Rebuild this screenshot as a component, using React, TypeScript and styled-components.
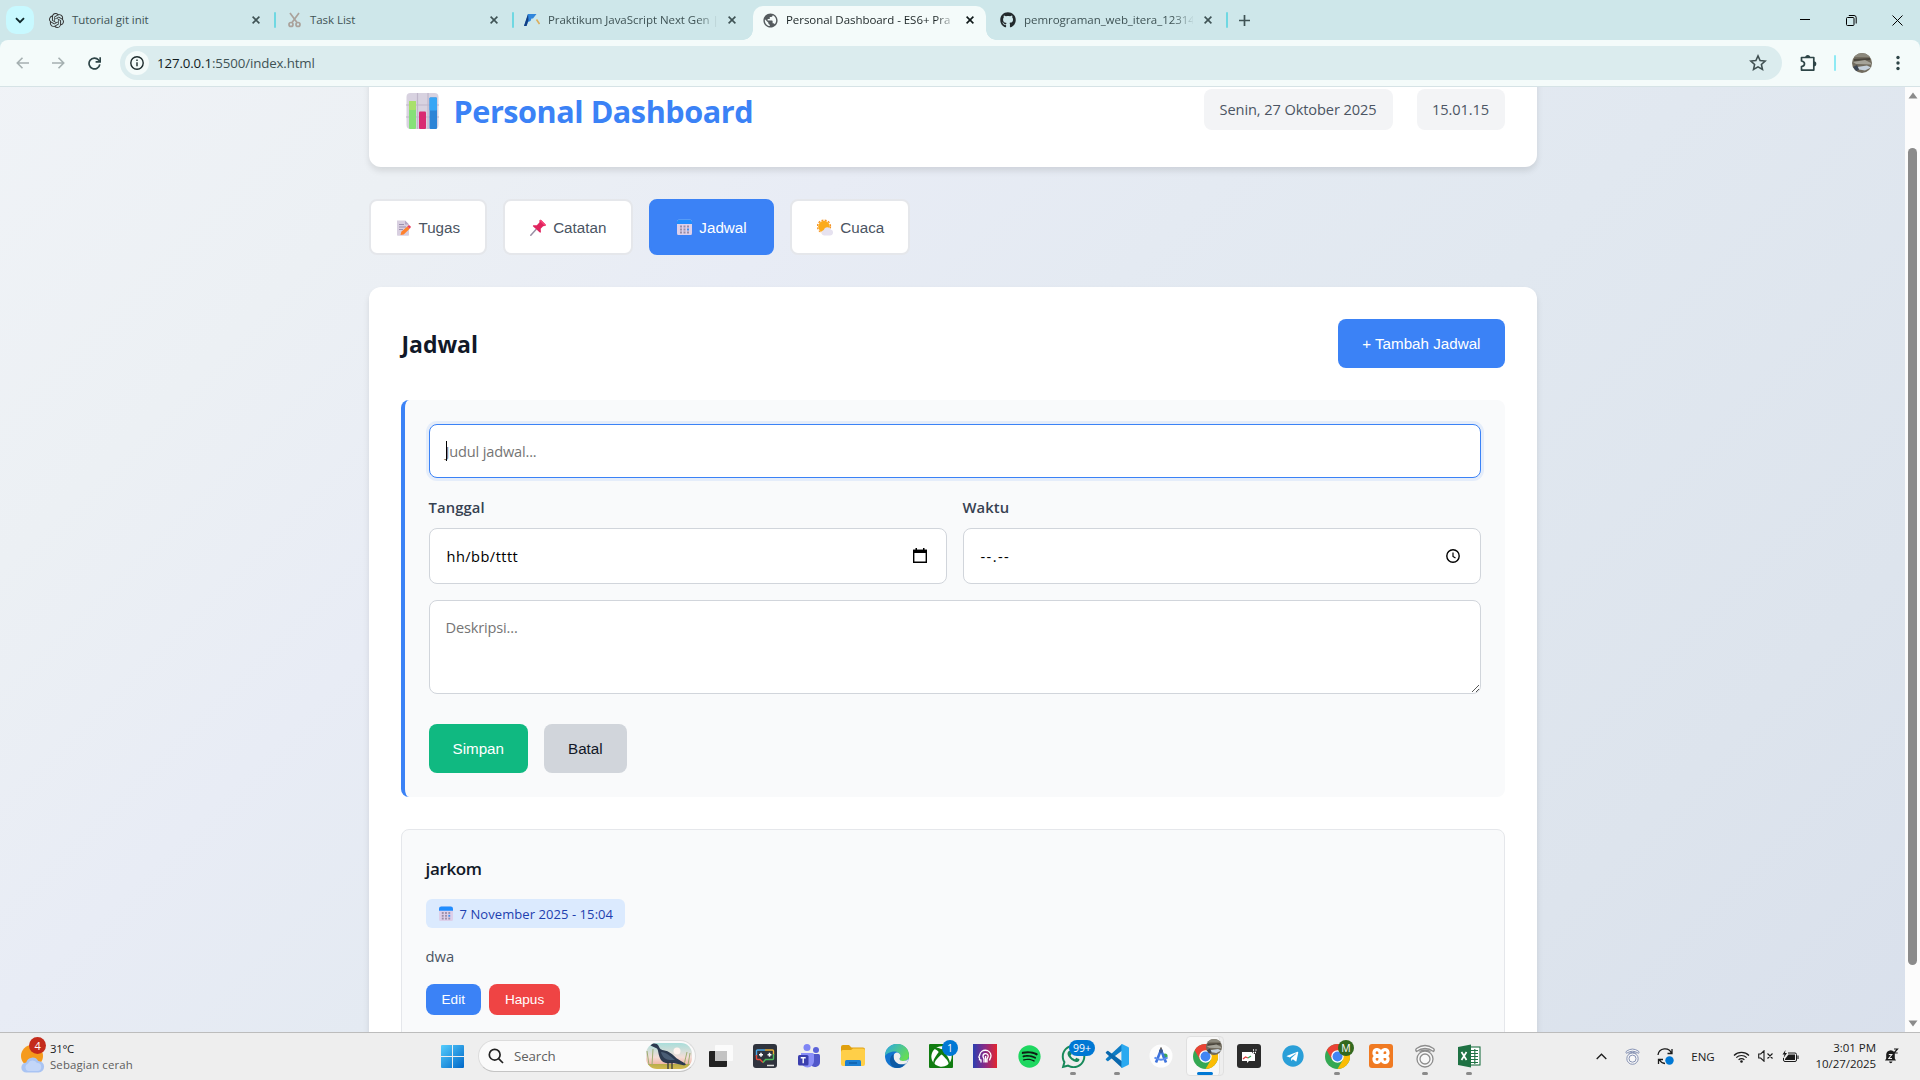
import React from 'react';
import styled, { createGlobalStyle, css } from 'styled-components';
import { FaGithub, FaXbox, FaSpotify, FaWhatsapp, FaTelegram } from 'react-icons/fa';
import { SiOpenai } from 'react-icons/si';
import { MdPublic } from 'react-icons/md';

const ui = `"Open Sans", "Noto Sans", sans-serif`;
const arial = `"Liberation Sans", Arial, sans-serif`;

const GlobalStyle = createGlobalStyle`
  * { box-sizing: border-box; }
  html, body { margin: 0; padding: 0; overflow: hidden; }
  body { font-family: ${ui}; }
  svg { display: block; flex: none; }
`;

const Screen = styled.div`
  width: 1920px;
  height: 1080px;
  display: flex;
  flex-direction: column;
  overflow: hidden;
`;

/* ---------- browser chrome ---------- */

const TabStrip = styled.div`
  height: 40px;
  flex: none;
  background: #cee7ea;
  display: flex;
  padding-left: 6px;
`;

const TabSearch = styled.div`
  width: 28px;
  height: 28px;
  margin: 6px 5px 0 0;
  border-radius: 10px;
  background: #c8f9ff;
  display: grid;
  place-items: center;
`;

const Tab = styled.div<{ $active?: boolean }>`
  position: relative;
  width: 238px;
  flex: none;
  height: 34px;
  margin-top: 6px;
  padding: 0 0 6px 9px;
  display: flex;
  align-items: center;
  color: ${p => (p.$active ? '#1c2526' : '#3f5355')};
  ${p =>
    p.$active &&
    css`
      width: 233px;
      margin-right: 5px;
      border-radius: 10px 10px 0 0;
      background: #f4fbfa;
      &::before, &::after {
        content: '';
        position: absolute;
        bottom: 0;
        width: 10px;
        height: 10px;
      }
      &::before { left: -10px; background: radial-gradient(circle at 0 0, transparent 9.5px, #f4fbfa 10px); }
      &::after { right: -10px; background: radial-gradient(circle at 100% 0, transparent 9.5px, #f4fbfa 10px); }
    `}
`;

const Favicon = styled.div`
  width: 16px;
  height: 16px;
  flex: none;
  margin-right: 8px;
  display: grid;
  place-items: center;
`;

const TabTitle = styled.div<{ $fade?: boolean }>`
  width: 169px;
  flex: none;
  white-space: nowrap;
  font-size: 11.5px;
  line-height: 18px;
  letter-spacing: -0.05px;
  ${p => p.$fade && 'mask-image: linear-gradient(90deg, #000 88%, transparent 101%);'}
`;

const TabClose = styled.div`
  width: 16px;
  flex: none;
  margin-left: 7px;
  display: grid;
  place-items: center;
`;

const TabDivider = styled.div`
  width: 2px;
  height: 16px;
  margin-left: 10px;
  border-radius: 1px;
  background: #6fd8e2;
`;

const NewTab = styled.div`
  width: 28px;
  height: 28px;
  margin: 6px 0 0 1px;
  display: grid;
  place-items: center;
`;

const WindowButtons = styled.div`
  margin-left: auto;
  display: flex;
`;

const WindowButton = styled.div`
  width: 46px;
  height: 40px;
  display: grid;
  place-items: center;
`;

const ToolbarWrap = styled.div`
  height: 47px;
  flex: none;
  background: #cee7ea;
`;

const Toolbar = styled.div`
  height: 47px;
  background: #f4fbfa;
  border-radius: 8px 8px 0 0;
  border-bottom: 1px solid #d6e3e6;
  display: flex;
  align-items: center;
  padding-left: 4px;
`;

const ToolButton = styled.div<{ $w?: number }>`
  width: ${p => p.$w ?? 36}px;
  height: 34px;
  display: grid;
  place-items: center;
`;

const Omnibox = styled.div`
  width: 1662px;
  height: 34px;
  margin-left: 8px;
  border-radius: 17px;
  background: #dbecee;
  display: flex;
  align-items: center;
  padding: 0 13px 0 5px;
`;

const SiteInfo = styled.div`
  width: 24px;
  height: 24px;
  border-radius: 50%;
  background: #f4fbfa;
  display: grid;
  place-items: center;
`;

const Url = styled.div`
  margin-left: 8px;
  flex: 1;
  font-size: 13.3px;
  letter-spacing: -0.13px;
  color: #3f5355;
  span { color: #111b1c; }
`;

const ToolDivider = styled.div`
  width: 2px;
  height: 16px;
  border-radius: 1px;
  background: #8eeaf4;
`;

/* ---------- page ---------- */

const Viewport = styled.div`
  height: 945px;
  flex: none;
  display: flex;
  overflow: hidden;
`;

const Page = styled.div`
  width: 1905px;
  height: 1058px;
  margin-top: -53px;
  padding: 19px 368.5px 0;
  background: linear-gradient(135deg, #f0f3f7 0%, #ecf0f4 18%, #e8ecf5 33%, #e4eaf2 46%, #e1e8f0 59%, #dde4ed 82%, #d9e0ec 100%);
`;

const Card = styled.section`
  background: #fff;
  border-radius: 12px;
  box-shadow: 0 4px 6px rgba(0, 0, 0, 0.1);
`;

const Header = styled(Card)`
  height: 114px;
  padding: 0 32px;
  display: flex;
  align-items: center;
`;

const Brand = styled.h1`
  margin: 0;
  flex: 1;
  display: flex;
  align-items: center;
  gap: 15px;
  padding: 1px 0 0 5px;
  font-size: 30.6px;
  line-height: 44px;
  font-weight: 700;
  letter-spacing: -0.45px;
  color: #3b82f6;
`;

const Chip = styled.div<{ $w: number }>`
  width: ${p => p.$w}px;
  height: 41px;
  margin: -1px 0 0 24px;
  padding-bottom: 1px;
  border-radius: 8px;
  background: #f3f4f6;
  color: #4b5563;
  font-size: 14.6px;
  letter-spacing: -0.1px;
  display: flex;
  align-items: center;
  justify-content: center;
  white-space: nowrap;
`;

const Nav = styled.nav`
  display: flex;
  gap: 16px;
  margin: 32px 0;
`;

const NavButton = styled.button<{ $w: number; $active?: boolean }>`
  width: ${p => p.$w}px;
  height: 56px;
  padding: 0 0 0 1px;
  border: 2px solid ${p => (p.$active ? '#3b82f6' : '#e5e7eb')};
  border-radius: 8px;
  background: ${p => (p.$active ? '#3b82f6' : '#fff')};
  color: ${p => (p.$active ? '#fff' : '#4b5563')};
  font: 15.2px ${arial};
  display: flex;
  align-items: center;
  justify-content: center;
  gap: 7.5px;
`;

const Panel = styled(Card)`
  height: 900px;
  padding: 32px;
`;

const PanelHead = styled.div`
  height: 49px;
  display: flex;
  align-items: center;
  justify-content: space-between;
  margin-bottom: 32px;
`;

const PanelTitle = styled.h2`
  margin: 0 0 0 1px;
  font-size: 23px;
  font-weight: 700;
  letter-spacing: -0.05px;
  color: #111827;
`;

const tones = {
  primary: ['#3b82f6', '#fff'],
  success: ['#10b981', '#fff'],
  neutral: ['#d1d5db', '#111827'],
  danger: ['#ef4444', '#fff'],
};

const Button = styled.button<{ $tone: keyof typeof tones; $small?: boolean }>`
  height: ${p => (p.$small ? 31 : 49)}px;
  padding: 0 ${p => (p.$small ? 16 : 24)}px;
  border: 0;
  border-radius: 8px;
  background: ${p => tones[p.$tone][0]};
  color: ${p => tones[p.$tone][1]};
  font: ${p => (p.$small ? 13.6 : 15.2)}px ${arial};
  white-space: nowrap;
`;

const Form = styled.div`
  height: 397px;
  border-left: 4px solid #3b82f6;
  border-radius: 8px;
  background: #f9fafb;
  padding: 24px;
  display: flex;
  flex-direction: column;
`;

const Field = styled.div<{ $h: number; $focus?: boolean; $area?: boolean }>`
  position: relative;
  height: ${p => p.$h}px;
  flex: none;
  border: 1px solid ${p => (p.$focus ? '#3b82f6' : '#d1d5db')};
  border-radius: 8px;
  background: #fff;
  ${p => p.$focus && 'box-shadow: 0 0 0 3px rgba(59, 130, 246, 0.1);'}
  padding: ${p => (p.$area ? '15px 16px 0' : '0 16px')};
  display: flex;
  align-items: ${p => (p.$area ? 'flex-start' : 'center')};
  justify-content: space-between;
  font-size: 14.6px;
  letter-spacing: -0.17px;
  line-height: 22px;
  color: #000;
`;

const Placeholder = styled.span`
  color: #757575;
`;

const FieldValue = styled.span<{ $ls: number }>`
  margin-left: 1px;
  letter-spacing: ${p => p.$ls}px;
`;

const Caret = styled.i`
  position: absolute;
  left: 16px;
  top: 16px;
  width: 1px;
  height: 20px;
  background: #000;
`;

const Grip = styled.svg`
  position: absolute;
  right: 1px;
  bottom: 1px;
`;

const FieldRow = styled.div`
  display: grid;
  grid-template-columns: 1fr 1fr;
  gap: 16px;
  margin: 18px 0 16px;
`;

const FieldLabel = styled.label`
  display: block;
  height: 24px;
  margin-bottom: 8px;
  font-size: 14.8px;
  line-height: 23px;
  font-weight: 600;
  letter-spacing: 0.1px;
  color: #374151;
`;

const Actions = styled.div<{ $gap: number; $top: number }>`
  display: flex;
  gap: ${p => p.$gap}px;
  margin-top: ${p => p.$top}px;
`;

const Item = styled.article`
  height: 240px;
  margin-top: 32px;
  border: 1px solid #e5e7eb;
  border-radius: 8px;
  background: #f9fafb;
  padding: 24px;
`;

const ItemTitle = styled.h3`
  margin: 0 0 16px;
  font-size: 17px;
  line-height: 29px;
  font-weight: 600;
  letter-spacing: -0.35px;
  color: #111827;
`;

const DateBadge = styled.div`
  width: 199px;
  height: 29px;
  border-radius: 6px;
  background: #dbeafe;
  color: #1e40af;
  font-size: 13px;
  letter-spacing: 0.07px;
  display: flex;
  align-items: center;
  padding-left: 13px;
  gap: 7px;
  white-space: nowrap;
`;

const ItemText = styled.p`
  margin: 16px 0 0;
  font-size: 14.8px;
  line-height: 24px;
  color: #4b5563;
`;

const Scrollbar = styled.div`
  width: 15px;
  height: 945px;
  background: #fcfcfc;
  display: flex;
  flex-direction: column;
  align-items: center;
  padding: 5px 0;
`;

const Thumb = styled.div`
  width: 9px;
  height: 817px;
  margin: 49px 0 auto;
  border-radius: 5px;
  background: #8b8b8b;
`;

/* ---------- taskbar ---------- */

const Taskbar = styled.footer`
  height: 48px;
  flex: none;
  background: #eee;
  border-top: 1px solid #bcbcbc;
  display: flex;
  align-items: center;
  padding-bottom: 1px;
`;

const Weather = styled.div`
  width: 430px;
  padding: 1px 0 0 20px;
  display: flex;
  align-items: center;
  gap: 5px;
  font-size: 11.4px;
  line-height: 16px;
  letter-spacing: -0.3px;
  color: #1b1b1b;
  div div + div { color: #5d5d5d; letter-spacing: 0.12px; }
`;

const StartCell = styled.div`
  width: 45px;
  display: grid;
  place-items: center;
`;

const SearchPill = styled.div`
  width: 218px;
  height: 32px;
  margin: 0 3px;
  border: 1px solid #dcdcdc;
  border-bottom-color: #c4c4c4;
  border-radius: 16px;
  background: #fafafa;
  display: flex;
  align-items: center;
  padding: 0 3px 0 9px;
  font-size: 13.3px;
  letter-spacing: -0.1px;
  color: #5f5f5f;
  span { flex: 1; margin: 0 0 1px 10px; }
`;

const AppCell = styled.div`
  position: relative;
  width: 44px;
  height: 47px;
  display: grid;
  place-items: center;
`;

const ActiveApp = styled.div`
  width: 38px;
  height: 40px;
  border: 1px solid #e0e0e0;
  border-radius: 4px;
  background: #f8f8f8;
  box-shadow: inset -4px 0 0 -1px #eee, inset -5px 0 0 -1px #e2e2e2;
  display: grid;
  place-items: center;
`;

const Indicator = styled.i<{ $active?: boolean }>`
  position: absolute;
  bottom: 5px;
  left: ${p => (p.$active ? 14 : 19)}px;
  width: ${p => (p.$active ? 16 : 6)}px;
  height: 3px;
  border-radius: 2px;
  background: ${p => (p.$active ? '#0078d4' : '#8a8a8a')};
`;

const Badge = styled.b<{ $bg?: string; $wide?: boolean }>`
  position: absolute;
  top: 7px;
  left: ${p => (p.$wide ? 18 : 23)}px;
  min-width: 16px;
  height: 16px;
  padding: 0 ${p => (p.$wide ? 4 : 0)}px;
  border-radius: 8px;
  background: ${p => p.$bg ?? '#0078d4'};
  color: #fff;
  font: 10.5px/16px ${ui};
  text-align: center;
`;

const AvatarBadge = styled.div`
  position: absolute;
  top: 6px;
  left: 23px;
`;

const Tray = styled.div`
  margin-left: auto;
  padding-right: 14px;
  display: flex;
  align-items: center;
`;

const TrayCell = styled.div<{ $w: number }>`
  width: ${p => p.$w}px;
  display: grid;
  place-items: center;
  font-size: 11.5px;
  color: #1b1b1b;
`;

const Clock = styled.div`
  width: 70px;
  text-align: right;
  font-size: 11.5px;
  line-height: 16px;
  letter-spacing: -0.05px;
  color: #1b1b1b;
`;

/* ---------- drawings ---------- */

const CloseIcon = ({ c = '#3f5355' }: { c?: string }) => (
  <svg width="8" height="8" viewBox="0 0 8 8" stroke={c} strokeWidth="1.6"><path d="M.6.6l6.8 6.8M7.4.6L.6 7.4" /></svg>
);

const ChartEmoji = () => (
  <svg width="33" height="36" viewBox="0 0 33 36">
    <rect x=".5" width="32" height="36" rx="4" fill="#d8d2e0" />
    <path d="M11.5 0v36M22 0v36M0 12h33M0 24h33" stroke="#bfb6ca" strokeWidth="1.2" />
    <rect x="3" y="8" width="7" height="28" rx="1" fill="#86e077" />
    <rect x="3" y="8" width="7" height="9" rx="1" fill="#a9e06c" />
    <rect x="13" y="18.500" width="7" height="17.500" rx="1" fill="#d92b72" />
    <rect x="23.500" y="4.500" width="7.500" height="31.500" rx="1" fill="#2d84d6" />
    <rect x="23.500" y="4.500" width="7.500" height="13" rx="1" fill="#38a6f5" />
  </svg>
);

const MemoEmoji = () => (
  <svg width="15" height="17" viewBox="0 0 15 17">
    <path d="M1 1.500h8l4 4V16a.8.8 0 0 1-.8.8H1.800A.8.800 0 0 1 1 16z" fill="#d8cfe0" />
    <path d="M9 1.500l4 4H9z" fill="#b3a6c2" />
    <path d="M3 5.500h5M3 8h7M3 10.500h4" stroke="#9c8fae" strokeWidth="1" />
    <path d="M4.500 16l.8-3.200 6-5.300 2.400 2.300-6 5.600z" fill="#ff822d" />
    <path d="M11.300 7.500l1-1a1 1 0 0 1 1.400 0l.8.8a1 1 0 0 1 0 1.400l-.8 1.100z" fill="#e8405f" />
  </svg>
);

const PinEmoji = () => (
  <svg width="16" height="17" viewBox="0 0 16 17">
    <path d="M6 10.500L.8 16.300" stroke="#998ea4" strokeWidth="1.500" strokeLinecap="round" />
    <path d="M9.500 1.500c.4-1 1.200-1 1.900-.3l4 4c.6.700.4 1.500-.5 1.700l-1.800.3-2.400 2.600.2 3c0 .9-.8 1.100-1.400.5L3.200 7.600c-.6-.7-.3-1.400.5-1.400l3.100.1 2.600-2.700z" fill="#e0245e" />
    <path d="M9.500 1.500c.4-1 1.200-1 1.900-.3l4 4c.6.700.4 1.500-.5 1.700z" fill="#f8477a" />
  </svg>
);

const CalendarEmoji = ({ s = 15 }: { s?: number }) => (
  <svg width={s} height={s * 1.1} viewBox="0 0 15 16.500">
    <rect y=".5" width="15" height="16" rx="2.500" fill="#ddd0ea" />
    <path d="M0 5V3A2.500 2.500 0 0 1 2.500.5h10A2.500 2.500 0 0 1 15 3v2z" fill="#1f8dff" />
    <g>
      {[3, 6.500, 10].map(x => [7, 10, 13].map(y => <rect key={`${x}-${y}`} x={x} y={y - 0.500} width="2" height="2" fill={x === 10 && y === 10 ? '#3b8df0' : '#998da6'} />))}
    </g>
  </svg>
);

const WeatherEmoji = () => (
  <svg width="16" height="17" viewBox="0 0 16 17">
    <circle cx="7" cy="7.500" r="5.800" fill="#fbab1c" />
    <circle cx="7" cy="7.500" r="6.500" fill="none" stroke="#f59322" strokeWidth="1.300" strokeDasharray="2 1.400" />
    <path d="M7 16.500a2.800 2.800 0 0 1-.3-5.500 3.800 3.800 0 0 1 7-.6A3.100 3.100 0 0 1 13 16.500z" fill="#e6e2f0" />
  </svg>
);

const ChromeLogo = () => (
  <svg width="25" height="25" viewBox="0 0 48 48">
    <circle cx="24" cy="24" r="24" fill="#34a853" />
    <path d="M24 12h20.800A24 24 0 0 1 24 48l10.400-18z" fill="#fbbc05" />
    <path d="M3.200 12A24 24 0 0 1 44.800 12H24L13.600 30z" fill="#ea4335" />
    <circle cx="24" cy="24" r="12" fill="#fff" />
    <circle cx="24" cy="24" r="9.500" fill="#4285f4" />
  </svg>
);

const Photo = ({ s }: { s: number }) => (
  <svg width={s} height={s} viewBox="0 0 20 20">
    <clipPath id={`ph${s}`}><circle cx="10" cy="10" r="10" /></clipPath>
    <g clipPath={`url(#ph${s})`}>
      <rect width="20" height="20" fill="#716b5e" />
      <path d="M0 0h20v4H0z" fill="#8b887c" />
      <path d="M2 6l16-1v2L2 8z" fill="#4a463d" />
      <path d="M1 9l12-2 6 3v1.500L4 11z" fill="#a5a399" />
      <path d="M5 14l10-1.500 4 2-6 3-6-1z" fill="#c4d0dc" />
      <path d="M1 14l4-2 2 4.500-3 2z" fill="#3c4654" />
    </g>
  </svg>
);

const CloudSun = () => (
  <svg width="25" height="40" viewBox="0 0 25 40">
    <circle cx="12" cy="19" r="11" fill="#f59a1d" />
    <path d="M6.500 35.500a5 5 0 0 1-.3-10 6.500 6.500 0 0 1 12-1.500 5.500 5.500 0 0 1 .3 11.500z" fill="#a9c4f3" />
    <path d="M8 34a4 4 0 0 1 0-7.500 5 5 0 0 1 9-.5 4 4 0 0 1 .5 8z" fill="#c3d6f8" />
  </svg>
);

const WeatherIcon = styled.div`
  position: relative;
  width: 25px;
  height: 40px;
`;

const AlertDot = styled.b`
  position: absolute;
  left: 9px;
  top: 0;
  width: 17px;
  height: 17px;
  border-radius: 50%;
  background: #c42b1c;
  color: #fff;
  font: 11px/17px ${ui};
  text-align: center;
`;

const Bird = () => (
  <svg width="46" height="26" viewBox="0 0 46 26">
    <defs>
      <linearGradient id="sky" x1="0" y1="0" x2="0" y2="1">
        <stop offset="0" stopColor="#a9dedb" /><stop offset=".55" stopColor="#f3ddd6" /><stop offset=".8" stopColor="#f1b9a8" /><stop offset=".82" stopColor="#b9ae4a" /><stop offset="1" stopColor="#d3b950" />
      </linearGradient>
    </defs>
    <rect width="46" height="26" rx="11" fill="url(#sky)" />
    <circle cx="31" cy="8" r="3.500" fill="#fff3ee" />
    <path d="M3 22L1 8M6 22L7 6M38 22l3-13M42 22l2-12" stroke="#9fae74" strokeWidth="1" />
    <path d="M4.500 2.500c2-3 6.500-2.500 8 .2 1 2 1.500 4 5 4.500 6 1 9 4 13 8l9 5.500c1 1-1 2-3 1.300l-9-2c-7 1-12 0-14-6C12 10 12.500 7.500 11 5.500z" fill="#2c3a50" />
    <path d="M15 9c5 0 9 4 14 8h-5c-4 0-8-3-9-8z" fill="#4a5d75" />
    <path d="M22 19v7M26 19v7" stroke="#2b2f38" strokeWidth="1.200" />
  </svg>
);

const TaskView = () => (
  <svg width="24" height="24" viewBox="0 0 24 24">
    <rect x="0" y="7" width="18" height="16" rx="1" fill="#222" />
    <rect x="6" y="1" width="18" height="16" rx="1" fill="#fbfbfb" />
    <rect x="6" y="7" width="12" height="10" fill="#c3c3c3" />
  </svg>
);

const GameChat = () => (
  <svg width="24" height="24" viewBox="0 0 24 24">
    <rect width="24" height="24" rx="3" fill="#2f333d" />
    <g fill="none" strokeWidth="1.400">
      <path d="M12 6H4.500Q3.500 6 3.500 7v5" stroke="#4aa8e8" />
      <path d="M12 6h7.500q1 0 1 1v4" stroke="#e9b23b" />
      <path d="M3.500 11v3.500q0 1 1 1H7l3 3" stroke="#e74a3c" />
      <path d="M20.500 10v4.500q0 1-1 1h-7l-2.500 3" stroke="#4fbd5b" />
    </g>
    <path d="M6 10.800h4M8 8.800v4M14.500 10.800h4M16.500 8.800v4" stroke="#fff" strokeWidth="1.500" />
    <path d="M14 21.500h7" stroke="#ddd" strokeWidth="1.500" />
  </svg>
);

const Teams = () => (
  <svg width="24" height="24" viewBox="0 0 24 24">
    <circle cx="10" cy="3.500" r="3.500" fill="#7f85f5" />
    <circle cx="19" cy="6" r="3" fill="#5a62d8" />
    <path d="M14 10h7.500q1.500 0 1.500 1.500V18a5 5 0 0 1-9 3z" fill="#5157c9" />
    <path d="M4 9h11.500q1.500 0 1.500 1.500V17a6.500 6.500 0 0 1-13 0z" fill="#8b8ff8" />
    <rect x="1" y="11" width="10.500" height="10.500" rx="1.500" fill="#3b3fae" />
    <path d="M3.700 13.700h5M6.200 13.700v5.500" stroke="#fff" strokeWidth="1.400" />
  </svg>
);

const Folder = () => (
  <svg width="24" height="24" viewBox="0 0 24 24">
    <path d="M0 3q0-2 2-2h6l2.500 2.500H22q2 0 2 2V8H0z" fill="#e0a00e" />
    <path d="M0 8q0-2 2-2h8l2-1.500h10q2 0 2 2V20q0 2-2 2H2q-2 0-2-2z" fill="#ffcf48" />
    <path d="M4 22v-4.500Q4 16 5.500 16h13q1.500 0 1.500 1.500V22z" fill="#1c7fd2" />
    <path d="M8 19h8" stroke="#0c58a0" strokeWidth="1.200" />
  </svg>
);

const Edge = () => (
  <svg width="24" height="24" viewBox="0 0 24 24">
    <defs>
      <linearGradient id="e1" x1="0" y1="0" x2="1" y2=".6"><stop offset="0" stopColor="#2aa7e8" /><stop offset="1" stopColor="#66dd55" /></linearGradient>
    </defs>
    <circle cx="12" cy="12" r="12" fill="#1374cf" />
    <path d="M0 12A12 12 0 0 1 24 11.500c0 4-3 5.500-6 5.500-3 0-4-1-3.500-2 .5-1 1-1.500 1-3C15.500 9 12.500 7.500 9.500 7.500 5 7.500 1 10 0 12z" fill="url(#e1)" />
    <path d="M8.500 12.500c0-2.500 2-4 3.500-4s3.500 1.500 3.500 3.500c0 1.500-1 2-1 3 0 1.200 1.500 2 3.500 2 2.500 0 4.500-1 5.200-2.300 0 2-1.200 4.300-3.200 6.300-6 1.500-11.500-3-11.500-8.500z" fill="#eee" />
    <path d="M8.500 12.500c0 4 3 8 8.500 7.800 1.800 0 3-.6 4-1.300-2 3-5 5-9 5C7 24 5 20 5 16.500c0-3 1.500-5.500 3.500-6.500z" fill="#0c59a4" />
  </svg>
);

const Sqr = styled.div<{ $bg: string; $r?: number }>`
  width: 24px;
  height: 24px;
  border-radius: ${p => p.$r ?? 0}px;
  background: ${p => p.$bg};
  color: #fff;
  display: grid;
  place-items: center;
`;

const HeadIcon = () => (
  <svg width="18" height="18" viewBox="0 0 18 18" fill="none" stroke="#fff" strokeWidth="1.300">
    <path d="M5 15.500v-2.500l-1.500-.3v-2L2.800 10l.9-2A5.700 5.700 0 0 1 15 8.500c0 2.500-1.500 3.500-1.500 5" />
    <path d="M8 15.500v-3.500L7 9.500a2.600 2.600 0 0 1 5.200-.5c0 1.700-1.200 2-1.200 3.500v3M9.600 9v6.500" />
  </svg>
);

const VsCode = () => (
  <svg width="24" height="24" viewBox="0 0 24 24">
    <path d="M17 0L1 14.700q-.6.600 0 1.200l1.300 1.200q.5.400 1 0L18 6z" fill="#0f7cc4" />
    <path d="M17 24L1 9.300Q.4 8.700 1 8.100l1.300-1.200q.5-.4 1 0L18 18z" fill="#0a68ad" />
    <path d="M17 0l6.200 2.900q.8.400.8 1.300v15.600q0 .9-.8 1.300L17 24q-.6-.3-.6-1V1q0-.7.600-1z" fill="#2ba9f0" />
  </svg>
);

const AndroidStudio = () => (
  <svg width="24" height="24" viewBox="0 0 24 24">
    <circle cx="12" cy="12" r="11.500" fill="#fdfdfd" />
    <circle cx="16" cy="12" r="2.600" fill="#3aa757" />
    <path d="M12 6L7 18.500M12 6l5 12.500" stroke="#3d73dd" strokeWidth="2.600" fill="none" />
    <path d="M5.500 13.500q6.500 4.500 13 0" stroke="#5b8dee" strokeWidth="2" fill="none" />
    <circle cx="12" cy="7" r="2" fill="#3b5a94" />
    <path d="M12 3.500v2" stroke="#444" strokeWidth="1.600" />
  </svg>
);

const ChartApp = () => (
  <svg width="16" height="14" viewBox="0 0 16 14">
    <path d="M1 3h10v2l3 0v7H8l-2 2v-2H1z" fill="#fff" />
    <path d="M2 10l2.500-2L7 9" stroke="#e03c3c" strokeWidth="1.300" fill="none" />
    <path d="M7 9l3-2" stroke="#3aa757" strokeWidth="1.300" />
    <path d="M10 7l3-4M12 1h1M14.500 1h1M14 3.500h1" stroke="#fff" strokeWidth="1.300" />
  </svg>
);

const Xampp = () => (
  <svg width="20" height="20" viewBox="0 0 20 20" fill="none" stroke="#fff" strokeWidth="3.200" strokeLinejoin="round">
    <path d="M9 6.500A3 3 0 1 0 5 9.500h10a3 3 0 1 0-4-3v7a3 3 0 1 0 4-3H5a3 3 0 1 0 4 3z" />
  </svg>
);

const RingApp = ({ s, c }: { s: number; c: string }) => (
  <svg width={s} height={s} viewBox="0 0 24 24" fill="none" stroke={c} strokeWidth="1.300">
    <circle cx="12" cy="15" r="8" fill="#f8f8f8" /><circle cx="12" cy="15" r="5" />
    <path d="M3.500 7.500q-1.500-1.500 0-3Q12-1.500 20.500 4.500q1.500 1.500 0 3Q12 1.500 3.500 7.500z" fill="#f8f8f8" />
    <path d="M6.500 7.500q5.500-2.500 11 0" />
  </svg>
);

const Excel = () => (
  <svg width="24" height="24" viewBox="0 0 24 24">
    <rect x="11" y="3" width="12" height="18" fill="#fff" stroke="#1f7244" strokeWidth="1.100" />
    <path d="M14 6.500h7M14 9.500h7M14 12.500h7M14 15.500h7M14 18.500h7M17.800 5v15" stroke="#1f7244" strokeWidth="1.100" />
    <path d="M1 3l13-2.500v23L1 21z" fill="#1f7244" />
    <path d="M4.500 8l5 8M9.500 8l-5 8" stroke="#fff" strokeWidth="1.700" />
  </svg>
);

const WindowsLogo = () => (
  <svg width="23" height="23" viewBox="0 0 23 23">
    <defs><linearGradient id="w" x1="0" y1="0" x2="1" y2="1"><stop offset="0" stopColor="#55cdfd" /><stop offset="1" stopColor="#0067c8" /></linearGradient></defs>
    <path d="M0 1q0-1 1-1h10v11H0zM12 0h10q1 0 1 1v10H12zM0 12h11v11H1q-1 0-1-1zM12 12h11v10q0 1-1 1H12z" fill="url(#w)" />
  </svg>
);

const XboxMark = styled.div`
  position: absolute;
  left: 11.5px;
  top: 13px;
`;

const RoundBack = styled.div<{ $c: string }>`
  border-radius: 50%;
  background: radial-gradient(circle, ${p => p.$c} 60%, transparent 62%);
`;

const App = () => (
  <Screen>
    <GlobalStyle />
    <TabStrip>
      <TabSearch>
        <svg width="10" height="7" viewBox="0 0 10 7" fill="none" stroke="#10292b" strokeWidth="1.900"><path d="M1 1.200l4 4 4-4" /></svg>
      </TabSearch>
      <Tab>
        <Favicon><SiOpenai size={15} color="#333" /></Favicon>
        <TabTitle>Tutorial git init</TabTitle>
        <TabClose><CloseIcon /></TabClose>
        <TabDivider />
      </Tab>
      <Tab>
        <Favicon>
          <svg width="13" height="16" viewBox="0 0 13 16" fill="none" stroke="#aaa29b" strokeWidth="1.700"><path d="M2 1l7 9.500M11 1L4 10.500" /><circle cx="3" cy="12.500" r="2" /><circle cx="10" cy="12.500" r="2" /></svg>
        </Favicon>
        <TabTitle>Task List</TabTitle>
        <TabClose><CloseIcon /></TabClose>
        <TabDivider />
      </Tab>
      <Tab>
        <Favicon>
          <svg width="16" height="12" viewBox="0 0 16 12"><path d="M4 0h8.500L9 4.500H7.500L6.500 7 4 8l-1.500 4H0z" fill="#2f86dc" /><path d="M4 0L0 12h2.500l2-6z" fill="#123e82" /><path d="M12.500 5.500l3 4.500" stroke="#dcae5c" strokeWidth="1.600" /></svg>
        </Favicon>
        <TabTitle $fade>Praktikum JavaScript Next Gen |</TabTitle>
        <TabClose><CloseIcon /></TabClose>
      </Tab>
      <Tab $active>
        <Favicon><MdPublic size={17} color="#555b5e" /></Favicon>
        <TabTitle $fade>Personal Dashboard - ES6+ Pra</TabTitle>
        <TabClose><CloseIcon c="#10191a" /></TabClose>
      </Tab>
      <Tab>
        <Favicon><FaGithub size={16} color="#22292c" /></Favicon>
        <TabTitle $fade>pemrograman_web_itera_12314</TabTitle>
        <TabClose><CloseIcon /></TabClose>
        <TabDivider />
      </Tab>
      <NewTab>
        <svg width="11" height="11" viewBox="0 0 11 11" stroke="#3f5355" strokeWidth="1.700"><path d="M5.500 0v11M0 5.500h11" /></svg>
      </NewTab>
      <WindowButtons>
        <WindowButton><svg width="10" height="10" viewBox="0 0 10 10"><path d="M0 4.500h10" stroke="#000" /></svg></WindowButton>
        <WindowButton><svg width="11" height="11" viewBox="0 0 11 11" fill="none" stroke="#000"><rect x=".5" y="2.500" width="7.500" height="8" rx="1" /><path d="M2.800.5H8A2.200 2.200 0 0 1 10.200 2.700V8.500" /></svg></WindowButton>
        <WindowButton><svg width="11" height="11" viewBox="0 0 11 11" stroke="#000"><path d="M.5.5l10 10M10.500.5l-10 10" /></svg></WindowButton>
      </WindowButtons>
    </TabStrip>

    <ToolbarWrap>
      <Toolbar>
        <ToolButton><svg width="13" height="12" viewBox="0 0 13 12" fill="none" stroke="#a5b0b1" strokeWidth="1.600"><path d="M13 6H1.500M6.500.8L1.300 6l5.200 5.200" /></svg></ToolButton>
        <ToolButton><svg width="13" height="12" viewBox="0 0 13 12" fill="none" stroke="#a5b0b1" strokeWidth="1.600"><path d="M0 6h11.500M6.500.8L11.700 6l-5.200 5.200" /></svg></ToolButton>
        <ToolButton><svg width="13" height="13" viewBox="0 0 13 13" fill="none" stroke="#2e4547" strokeWidth="1.700"><path d="M11.800 7.300A5.400 5.400 0 1 1 10.600 3L12 4.500" /><path d="M12.200.3v4.600H7.600" /></svg></ToolButton>
        <Omnibox>
          <SiteInfo><svg width="14" height="14" viewBox="0 0 14 14" fill="none" stroke="#1d2b2c" strokeWidth="1.400"><circle cx="7" cy="7" r="6.200" /><path d="M7 6.300v4M7 3.600v1.500" /></svg></SiteInfo>
          <Url><span>127.0.0.1</span>:5500/index.html</Url>
          <svg width="22" height="22" viewBox="0 0 24 24" fill="none" stroke="#3f4f51" strokeWidth="1.700"><path d="M12 4.300l2.300 5 5.500.6-4.100 3.700 1.200 5.400L12 16.200 7.100 19l1.200-5.400-4.100-3.700 5.500-.6z" /></svg>
        </Omnibox>
        <ToolButton $w={52}><svg width="18" height="18" viewBox="0 0 18 18" fill="none" stroke="#2e4547" strokeWidth="1.700"><path d="M2.500 3.500h12.300v12.600H2.500v-3.600c2.200-.2 3-1.200 3-2.700S4.500 7.300 2.500 7z" strokeLinejoin="round" /><path d="M7 3.500a1.700 1.700 0 0 1 3.400 0M14.800 8a1.700 1.700 0 0 1 0 3.400" fill="#2e4547" /></svg></ToolButton>
        <ToolDivider />
        <ToolButton $w={52}><Photo s={20} /></ToolButton>
        <ToolButton $w={20}><svg width="4" height="16" viewBox="0 0 4 16" fill="#2e4547"><circle cx="2" cy="2.500" r="1.700" /><circle cx="2" cy="8" r="1.700" /><circle cx="2" cy="13.500" r="1.700" /></svg></ToolButton>
      </Toolbar>
    </ToolbarWrap>

    <Viewport>
      <Page>
        <Header>
          <Brand><ChartEmoji />Personal Dashboard</Brand>
          <Chip $w={189}>Senin, 27 Oktober 2025</Chip>
          <Chip $w={88}>15.01.15</Chip>
        </Header>

        <Nav>
          <NavButton $w={118}><MemoEmoji />Tugas</NavButton>
          <NavButton $w={130}><PinEmoji />Catatan</NavButton>
          <NavButton $w={125.5} $active><CalendarEmoji />Jadwal</NavButton>
          <NavButton $w={120}><WeatherEmoji />Cuaca</NavButton>
        </Nav>

        <Panel>
          <PanelHead>
            <PanelTitle>Jadwal</PanelTitle>
            <Button $tone="primary">+ Tambah Jadwal</Button>
          </PanelHead>

          <Form>
            <Field $h={54} $focus><Placeholder>Judul jadwal...</Placeholder><Caret /></Field>
            <FieldRow>
              <div>
                <FieldLabel>Tanggal</FieldLabel>
                <Field $h={56}>
                  <FieldValue $ls={0.45}>hh/bb/tttt</FieldValue>
                  <svg width="20" height="16" viewBox="0 0 20 16"><path d="M3.700 2.500h12.600v11.800H3.700z" fill="none" stroke="#000" strokeWidth="1.400" /><path d="M3 1.800h14V5H3zM5.500 0h1.500v2H5.500zM13 0h1.500v2H13z" /></svg>
                </Field>
              </div>
              <div>
                <FieldLabel>Waktu</FieldLabel>
                <Field $h={56}>
                  <FieldValue $ls={1.4}>--.--</FieldValue>
                  <svg width="22" height="16" viewBox="0 0 22 16" fill="none" stroke="#000" strokeWidth="1.400"><circle cx="11" cy="8" r="6.200" /><path d="M11 4.500v4l2.500 1.600" strokeWidth="1.200" /></svg>
                </Field>
              </div>
            </FieldRow>
            <Field $h={94} $area>
              <Placeholder>Deskripsi...</Placeholder>
              <Grip width="7" height="7" viewBox="0 0 7 7" stroke="#444" strokeWidth=".9"><path d="M0 7l7-7M4 7l3-3" /></Grip>
            </Field>
            <Actions $gap={16} $top={30}>
              <Button $tone="success">Simpan</Button>
              <Button $tone="neutral">Batal</Button>
            </Actions>
          </Form>

          <Item>
            <ItemTitle>jarkom</ItemTitle>
            <DateBadge><CalendarEmoji s={14} />7 November 2025 - 15:04</DateBadge>
            <ItemText>dwa</ItemText>
            <Actions $gap={8} $top={16}>
              <Button $tone="primary" $small>Edit</Button>
              <Button $tone="danger" $small>Hapus</Button>
            </Actions>
          </Item>
        </Panel>
      </Page>
      <Scrollbar>
        <svg width="10" height="7" viewBox="0 0 10 7"><path d="M5 .5L9.500 6.500H.5z" fill="#8b8b8b" /></svg>
        <Thumb />
        <svg width="10" height="7" viewBox="0 0 10 7"><path d="M.5.500h9L5 6.500z" fill="#8b8b8b" /></svg>
      </Scrollbar>
    </Viewport>

    <Taskbar>
      <Weather>
        <WeatherIcon><CloudSun /><AlertDot>4</AlertDot></WeatherIcon>
        <div><div>31°C</div><div>Sebagian cerah</div></div>
      </Weather>
      <StartCell><WindowsLogo /></StartCell>
      <SearchPill>
        <svg width="16" height="16" viewBox="0 0 16 16" fill="none" stroke="#222" strokeWidth="1.700"><circle cx="6.700" cy="6.700" r="5.400" /><path d="M10.600 10.600L15 15" /></svg>
        <span>Search</span>
        <Bird />
      </SearchPill>
      <AppCell><TaskView /></AppCell>
      <AppCell><GameChat /></AppCell>
      <AppCell><Teams /></AppCell>
      <AppCell><Folder /></AppCell>
      <AppCell><Edge /></AppCell>
      <AppCell><Sqr $bg="#107c10" $r={1} /><XboxMark><FaXbox size={21} color="#fff" /></XboxMark><Badge>1</Badge></AppCell>
      <AppCell><Sqr $bg="linear-gradient(90deg, #2b3fb0, #8a2a86 50%, #e3262f)"><HeadIcon /></Sqr></AppCell>
      <AppCell><RoundBack $c="#0d1f14"><FaSpotify size={23} color="#1ed760" /></RoundBack></AppCell>
      <AppCell><FaWhatsapp size={27} color="#17895a" /><Badge $wide>99+</Badge><Indicator /></AppCell>
      <AppCell><VsCode /><Indicator /></AppCell>
      <AppCell><AndroidStudio /></AppCell>
      <AppCell><ActiveApp><ChromeLogo /></ActiveApp><AvatarBadge><Photo s={16} /></AvatarBadge><Indicator $active /></AppCell>
      <AppCell><Sqr $bg="#2b2b2b" $r={3}><ChartApp /></Sqr></AppCell>
      <AppCell><RoundBack $c="#fff"><FaTelegram size={22} color="#2a9fd8" /></RoundBack></AppCell>
      <AppCell><ChromeLogo /><Badge $bg="#33691e">M</Badge><Indicator /></AppCell>
      <AppCell><Sqr $bg="#f07a22" $r={3}><Xampp /></Sqr></AppCell>
      <AppCell><RingApp s={24} c="#8d8d8d" /><Indicator /></AppCell>
      <AppCell><Excel /><Indicator /></AppCell>
      <Tray>
        <TrayCell $w={28}><svg width="11" height="7" viewBox="0 0 11 7" fill="none" stroke="#1b1b1b" strokeWidth="1.300"><path d="M.7 6l4.800-4.800L10.300 6" /></svg></TrayCell>
        <TrayCell $w={34}><RingApp s={17} c="#7c89ad" /></TrayCell>
        <TrayCell $w={32}><svg width="17" height="17" viewBox="0 0 17 17" fill="none" stroke="#1b1b1b" strokeWidth="1.300"><path d="M1 7a7 7 0 0 1 13.500-1.500M15 1v4.500h-4.500M8 15.500A7 7 0 0 1 2.500 12M1.500 16v-4.500H6" /><circle cx="12.500" cy="12.500" r="4.200" fill="#0078d4" stroke="none" /></svg></TrayCell>
        <TrayCell $w={44}>ENG</TrayCell>
        <TrayCell $w={32}><svg width="17" height="13" viewBox="0 0 17 13" fill="none" stroke="#1b1b1b" strokeWidth="1.200"><path d="M1 5.500a10.500 10.500 0 0 1 15 0M3.300 7.700a7.300 7.300 0 0 1 10.400 0M5.600 9.800a4.100 4.100 0 0 1 5.800 0" /><circle cx="8.500" cy="11.500" r="1.300" fill="#1b1b1b" stroke="none" /></svg></TrayCell>
        <TrayCell $w={18}><svg width="16" height="12" viewBox="0 0 16 12" fill="none" stroke="#1b1b1b" strokeWidth="1.100"><path d="M.7 4h2L6 .8v10.400L2.700 8h-2zM9.500 3.500l5 5M14.500 3.500l-5 5" /></svg></TrayCell>
        <TrayCell $w={31}><svg width="17" height="13" viewBox="0 0 17 13"><path d="M6 3H13a1.500 1.500 0 0 1 1.500 1.500v5.500a1.500 1.500 0 0 1-1.500 1.500H3A1.500 1.500 0 0 1 1.500 10V8" fill="none" stroke="#1b1b1b" /><path d="M6.500 4.500H13v5.500H3V9z" fill="#1b1b1b" /><path d="M15.500 5.500h1v3.500h-1z" /><path d="M3.500 0L.5 4.500h2L1.500 8l3.500-5H3z" fill="#1b1b1b" /></svg></TrayCell>
        <Clock><div>3:01 PM</div><div>10/27/2025</div></Clock>
        <TrayCell $w={30}><svg width="15" height="16" viewBox="0 0 15 16"><path d="M1 12.500l1.200-2V6.500a4.500 4.500 0 0 1 8.600-1.500v5.500l1.200 2zM5 13.500h3.500q-.5 1.800-1.800 1.800T5 13.500z" fill="#1b1b1b" /><path d="M4.800 6.500h3l-3 4h3.200" stroke="#eee" strokeWidth="1.100" fill="none" /><path d="M10 1h3.500L10 5h3.700" stroke="#1b1b1b" strokeWidth="1.200" fill="none" /></svg></TrayCell>
      </Tray>
    </Taskbar>
  </Screen>
);

export default App;
